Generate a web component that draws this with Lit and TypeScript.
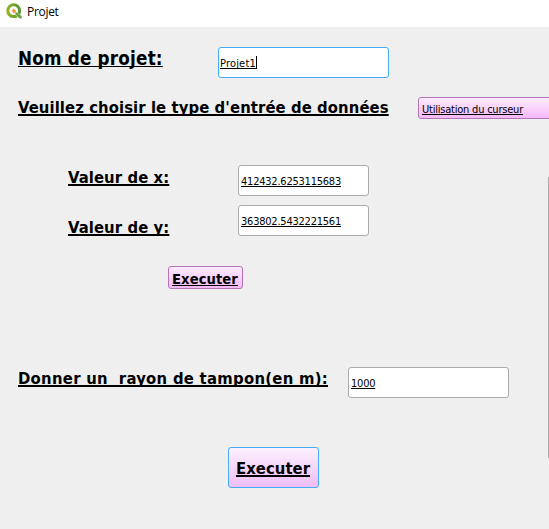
import { LitElement, html, css } from "lit";
import { customElement } from "lit/decorators.js";

@customElement("app-root")
export class AppRoot extends LitElement {
  static styles = css`
    :host {
      display: block; width: 549px; height: 529px; overflow: hidden;
      background: #efefef; color: #000;
      font-family: "DejaVu Sans Condensed", "DejaVu Sans", sans-serif;
      font-stretch: condensed;
    }
    * { box-sizing: border-box; }
    .titlebar { height: 27px; background: #fff; display: flex; align-items: flex-start; padding: 3px 0 0 6px; }
    .logo { width: 16px; height: 16px; flex: none; }
    .title { font: 12px/16px "Open Sans", sans-serif; margin: 1px 0 0 5px; letter-spacing: -0.3px; }
    .form { position: relative; height: 502px; display: flex; flex-direction: column; padding: 20px 0 0 18px; }
    .row { display: flex; align-items: flex-start; flex: none; white-space: pre; }
    .u { text-decoration: underline; text-decoration-skip-ink: none; text-decoration-thickness: 1px; text-underline-offset: 1px; }
    .label { font-weight: bold; font-size: 16.5px; line-height: 20px; letter-spacing: 0.09px; padding-top: 1px; flex: none; }
    .label .u, .go .u { text-decoration-thickness: 2px; }
    .field {
      border: 1px solid #ababab; border-radius: 3px; background: #fff; flex: none; display: flex;
      font-size: 11px; letter-spacing: -0.228px; height: 31px; line-height: 31px; padding-left: 2px;
    }
    .focus { border-color: #45adf5; padding-left: 1px; letter-spacing: 0.18px; }
    .caret { width: 1px; height: 13px; margin-top: 8px; background: #000; }
    .pink { border: 1px solid #b674b8; border-radius: 3px; background: linear-gradient(#fdecff, #f5b9f8); flex: none; }
    .scroll { position: absolute; right: 0; top: 150px; width: 1px; height: 281px; background: #ababab; }
    .name { height: 50px; }
    .name .label { font-size: 18.67px; letter-spacing: 0.21px; width: 200px; padding-top: 2px; }
    .name .label .u { text-decoration-thickness: 1px; }
    .name .field { width: 171px; }
    .kind { height: 68px; }
    .kind .label { width: 400px; }
    .combo { width: 140px; height: 22px; font-size: 11px; letter-spacing: -0.217px; line-height: 23px; padding-left: 3px; }
    .coord { height: 40px; padding-left: 50px; }
    .coord .label { width: 170px; padding-top: 3px; }
    .coord .field { width: 131px; }
    .y .label { padding-top: 13px; }
    .run { height: 122px; padding: 21px 0 0 150px; }
    .run .pink { width: 75px; height: 23px; padding-left: 3px; font-weight: bold; font-size: 14.67px; line-height: 23px; letter-spacing: 0.06px; }
    .buffer { height: 80px; }
    .buffer .label { width: 330px; letter-spacing: 0.28px; padding-top: 2px; }
    .buffer .field { width: 161px; }
    .go { padding-left: 210px; }
    .go .pink { width: 91px; height: 41px; padding-left: 7px; font-weight: bold; font-size: 16.5px; line-height: 41px; letter-spacing: 0.05px; border-color: #45adf5; background: linear-gradient(#fdf0ff, #efbdf6); }
  `;

  private line(label: string, value: string, kind: string) {
    return html`<div class="row ${kind}"><div class="label"><span class="u">${label}</span></div><div class="field"><span class="u">${value}</span></div></div>`;
  }

  render() {
    return html`
      <div class="titlebar">
        <svg class="logo" viewBox="0 0 16 16">
          <defs><linearGradient id="g"><stop stop-color="#93b023"/><stop offset="1" stop-color="#589632"/></linearGradient></defs>
          <circle cx="7.7" cy="7.7" r="5.9" fill="none" stroke="url(#g)" stroke-width="3"/>
          <path d="M8.2 8.2h2.6l5 5v2.6h-2.4l-5.2-5z" fill="#fff"/>
          <path d="M9.4 9.4h2.4l3.9 3.9v2.3h-2.1l-4.2-4z" fill="#6fa43a"/>
          <path d="M5.8 7.3l1.9-1.6 2.2 2-.4 2.1-2.1.3z" fill="#f0913d"/>
        </svg>
        <span class="title">Projet</span>
      </div>
      <div class="form">
        <div class="row name"><div class="label"><span class="u">Nom de projet:</span></div><div class="field focus"><span class="u">Projet1</span><span class="caret"></span></div></div>
        <div class="row kind"><div class="label"><span class="u">Veuillez choisir le type d'entrée de données</span></div><div class="pink combo"><span class="u">Utilisation du curseur</span></div></div>
        ${this.line("Valeur de x:", "412432.6253115683", "coord")}
        ${this.line("Valeur de y:", "363802.5432221561", "coord y")}
        <div class="row run"><div class="pink"><span class="u">Executer</span></div></div>
        ${this.line("Donner un  rayon de tampon(en m):", "1000", "buffer")}
        <div class="row go"><div class="pink"><span class="u">Executer</span></div></div>
        <div class="scroll"></div>
      </div>`;
  }
}
